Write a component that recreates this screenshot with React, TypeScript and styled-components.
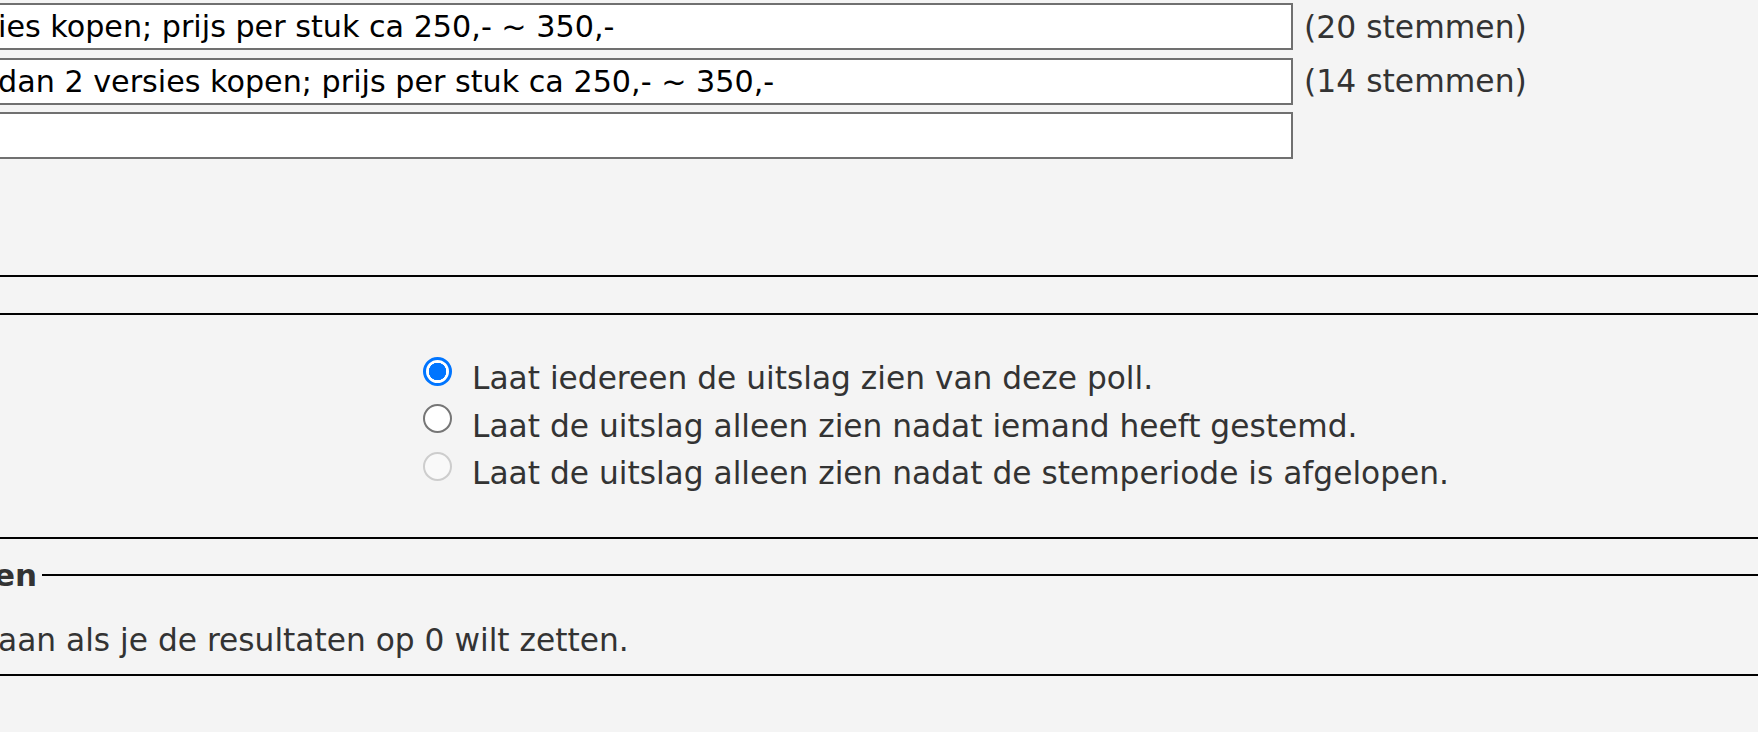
import React from 'react';
import styled, { createGlobalStyle } from 'styled-components';

const GlobalStyle = createGlobalStyle`
  html, body { margin: 0; padding: 0; background: #f4f4f4; overflow: hidden; }
  body { font-family: "DejaVu Sans", Verdana, sans-serif; font-size: 31.25px; color: #333; }
`;

const PollForm = styled.form`
  width: 1758px; height: 732px; overflow: hidden;
`;

const Fieldset = styled.fieldset<{ $mt: number; $pt: number; $pb: number }>`
  margin: ${p => p.$mt}px -30px 0 -30px;
  padding: ${p => p.$pt}px 0 ${p => p.$pb}px 17px;
  border: 2px solid #000;
  min-width: 0;
`;

const Legend = styled.legend`
  padding: 0 5px; font-weight: bold; font-size: 31px; line-height: 36px; color: #333;
  white-space: nowrap;
`;

const OptionRow = styled.div`
  display: flex; align-items: center; gap: 11px;
  & + & { margin-top: 7.5px; }
`;

const OptionInput = styled.input`
  box-sizing: border-box; flex: none;
  width: 1297px; height: 47px; margin: 0 0 0 7px; padding: 0;
  border: 2px solid #707070; background: #fff; outline: none;
  font-family: "DejaVu Sans", Verdana, sans-serif; font-size: 30.2px; color: #000;
`;

const VoteCount = styled.span`
  white-space: nowrap; line-height: 36px; font-size: 31.4px;
`;

const RadioList = styled.div`
  margin-left: 434px;
`;

const RadioRow = styled.label`
  display: flex; align-items: flex-start; height: 47.5px; line-height: 47.5px;
  white-space: nowrap;
`;

const Radio = styled.input.attrs({ type: 'radio' })`
  appearance: none; box-sizing: border-box; flex: none;
  width: 29px; height: 29px; margin: 1.5px 20px 0 0; border-radius: 50%;
  border: 2px solid #767676; background: #fff;
  &:checked {
    border: 3px solid #0075ff;
    background: radial-gradient(circle, #0075ff 0 8.5px, #fff 9px);
  }
  &:disabled { border-color: #cdcdcd; background: #f9f9f9; }
`;

const ResetText = styled.div`
  margin-left: 9px; line-height: 36px; white-space: nowrap;
`;

const options = [
  { text: 'ies kopen; prijs per stuk ca 250,- ~ 350,-', votes: 20 },
  { text: 'dan 2 versies kopen; prijs per stuk ca 250,- ~ 350,-', votes: 14 },
  { text: '', votes: null as number | null },
];

const visibility = [
  { label: 'Laat iedereen de uitslag zien van deze poll.', checked: true },
  { label: 'Laat de uitslag alleen zien nadat iemand heeft gestemd.' },
  { label: 'Laat de uitslag alleen zien nadat de stemperiode is afgelopen.', disabled: true },
];

export default function App() {
  return (
    <>
      <GlobalStyle />
      <PollForm onSubmit={e => e.preventDefault()}>
        <Fieldset $mt={-40} $pt={41.4} $pb={115.6}>
          {options.map((o, i) => (
            <OptionRow key={i}>
              <OptionInput type="text" defaultValue={o.text} />
              {o.votes !== null && <VoteCount>({o.votes} stemmen)</VoteCount>}
            </OptionRow>
          ))}
        </Fieldset>

        <Fieldset $mt={36} $pt={40.5} $pb={39}>
          <RadioList>
            {visibility.map((v, i) => (
              <RadioRow key={i}>
                <Radio name="zichtbaar" defaultChecked={v.checked} disabled={v.disabled} />
                {v.label}
              </RadioRow>
            ))}
          </RadioList>
        </Fieldset>

        <Fieldset $mt={18} $pt={29} $pb={16}>
          <Legend>en</Legend>
          <ResetText>aan als je de resultaten op 0 wilt zetten.</ResetText>
        </Fieldset>
      </PollForm>
    </>
  );
}
